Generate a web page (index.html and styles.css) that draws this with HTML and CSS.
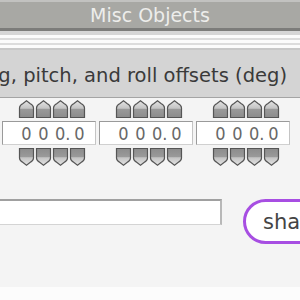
FILE: index.html
```html
<!doctype html>
<html lang="en">

<head>
  <meta charset="utf-8">
  <title>Misc Objects</title>
  <link rel="stylesheet" href="styles.css">
</head>

<body>
  <svg class="defs" width="0" height="0">
    <defs>
      <linearGradient id="upfill" x1="0" y1="0" x2="0" y2="1">
        <stop offset="0" stop-color="#e4e4e4"/>
        <stop offset="0.45" stop-color="#c4c4c4"/>
        <stop offset="0.5" stop-color="#9a9a9a"/>
        <stop offset="1" stop-color="#8c8c8c"/>
      </linearGradient>
      <linearGradient id="downfill" x1="0" y1="0" x2="0" y2="1">
        <stop offset="0" stop-color="#8c8c8c"/>
        <stop offset="0.5" stop-color="#9a9a9a"/>
        <stop offset="0.55" stop-color="#c4c4c4"/>
        <stop offset="1" stop-color="#e4e4e4"/>
      </linearGradient>
      <symbol id="up" viewBox="0 0 17 18">
        <path d="M1.5 17.5V8C1.5 5.5 3 4.5 5 3.5L8.5 0.8L12 3.5C14 4.5 15.5 5.5 15.5 8V17.5Z" fill="url(#upfill)" stroke="#555" stroke-width="1.2"/>
      </symbol>
      <symbol id="down" viewBox="0 0 17 18">
        <path d="M1.5 0.5H15.5V10C15.5 12.5 14 13.5 12 14.5L8.5 17.2L5 14.5C3 13.5 1.5 12.5 1.5 10Z" fill="url(#downfill)" stroke="#555" stroke-width="1.2"/>
      </symbol>
    </defs>
  </svg>

  <div class="panel">
    <div class="titlebar">Misc Objects</div>
    <div class="stripes"></div>
    <div class="heading">Heading, pitch, and roll offsets (deg)</div>

    <div class="offsets">
      <div class="spinner">
        <div class="arrows">
          <svg><use href="#up"/></svg><svg><use href="#up"/></svg><svg><use href="#up"/></svg><svg><use href="#up"/></svg>
        </div>
        <div class="value"><span>0</span><span>0</span><span>0.</span><span>0</span></div>
        <div class="arrows">
          <svg><use href="#down"/></svg><svg><use href="#down"/></svg><svg><use href="#down"/></svg><svg><use href="#down"/></svg>
        </div>
      </div>
      <div class="spinner">
        <div class="arrows">
          <svg><use href="#up"/></svg><svg><use href="#up"/></svg><svg><use href="#up"/></svg><svg><use href="#up"/></svg>
        </div>
        <div class="value"><span>0</span><span>0</span><span>0.</span><span>0</span></div>
        <div class="arrows">
          <svg><use href="#down"/></svg><svg><use href="#down"/></svg><svg><use href="#down"/></svg><svg><use href="#down"/></svg>
        </div>
      </div>
      <div class="spinner">
        <div class="arrows">
          <svg><use href="#up"/></svg><svg><use href="#up"/></svg><svg><use href="#up"/></svg><svg><use href="#up"/></svg>
        </div>
        <div class="value"><span>0</span><span>0</span><span>0.</span><span>0</span></div>
        <div class="arrows">
          <svg><use href="#down"/></svg><svg><use href="#down"/></svg><svg><use href="#down"/></svg><svg><use href="#down"/></svg>
        </div>
      </div>
    </div>

    <div class="name-row">
      <div class="name-field"></div>
      <div class="pill">shape</div>
    </div>
  </div>
</body>

</html>
```

FILE: styles.css
```css
html, body { margin:0; padding:0; }
body { width:300px; height:300px; overflow:hidden; background-color:#fcfcfc; font-family:"DejaVu Sans",sans-serif; }
.defs { position:absolute; }

.panel { width:600px; height:287px; margin-left:-150px; background-color:#f4f4f4; }

.titlebar { height:26px; border-top:2px solid #c2c2c0; border-bottom:3px solid #7c7c7a; background-color:#a8a8a4; color:#ededeb; font-size:19px; line-height:27px; text-align:center; }

.stripes { height:19px; background:linear-gradient(to bottom, #d6d6d6 0, #d6d6d6 4px, #fbfbfb 4px, #fbfbfb 7px, #dcdcdc 7px, #dcdcdc 9px, #fbfbfb 9px, #fbfbfb 12px, #dcdcdc 12px, #dcdcdc 14px, #fbfbfb 14px, #fbfbfb 17px, #c8c8c8 17px); }

.heading { height:43px; padding:4px 163px 0 0; line-height:43px; background-color:#d4d4d4; border-bottom:1px solid #a4a4a4; color:#3a3a3a; font-size:19.5px; text-align:right; white-space:nowrap; }

.offsets { display:flex; gap:3px; padding:2px 0 0 152px; }
.spinner { display:flex; flex-direction:column; gap:3px; width:94px; }
.arrows { display:flex; padding-left:16px; }
.arrows svg { width:17px; height:18px; }

.value { display:flex; height:22px; padding-left:15px; background-color:#fff; border:1px solid #9a9a9a; border-right-color:#c4c4c4; border-bottom-color:#d0d0d0; font-family:"DejaVu Sans Condensed","DejaVu Sans",sans-serif; font-size:18px; font-weight:300; line-height:23px; color:#686868; }
.value span { width:17px; text-align:center; white-space:nowrap; }
.value span:nth-child(3) { text-align:left; padding-left:3px; box-sizing:border-box; }
.value span:last-child { padding-left:2px; }

.name-row { display:flex; align-items:flex-start; margin-top:33px; }
.name-field { width:292px; height:23px; margin-left:78px; background-color:#fff; border-top:2px solid #a0a0a0; border-right:2px solid #b8b8b8; border-bottom:1px solid #d4d4d4; }
.pill { height:39px; margin-left:21px; padding:0 20px 0 17px; border:3px solid #a74ee2; border-radius:23px; background-color:#fff; color:#444; font-size:21px; line-height:41px; }
```
